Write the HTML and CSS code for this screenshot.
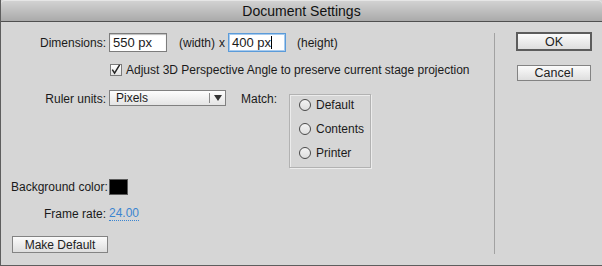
FILE: index.html
```html
<!DOCTYPE html>
<html>
<head>
<meta charset="utf-8">
<link rel="stylesheet" href="styles.css">
</head>
<body>
<div class="window">
  <div class="titlebar">Document Settings</div>
  <div class="content">
    <div class="main">
      <div class="row row-dim">
        <span class="label">Dimensions:</span>
        <span class="field">550 px</span>
        <span class="unit unit-w">(width)</span>
        <span class="times">x</span>
        <span class="field focus">400 px<span class="caret"></span></span>
        <span class="unit unit-h">(height)</span>
      </div>
      <div class="row row-check">
        <span class="checkbox"><svg width="12" height="12" viewBox="0 0 12 12"><path d="M2.5 5.5 L5 9.5 L10.5 0.5" fill="none" stroke="#222" stroke-width="1.6"/></svg></span>
        <span class="check-text">Adjust 3D Perspective Angle to preserve current stage projection</span>
      </div>
      <div class="row row-ruler">
        <span class="label pad">Ruler units:</span>
        <div class="select">
          <span class="select-text">Pixels</span>
          <span class="select-arrow"><svg width="8" height="6" viewBox="0 0 8 6"><path d="M0 0 H8 L4 6 Z" fill="#333"/></svg></span>
        </div>
        <span class="match pad">Match:</span>
        <div class="group">
          <div class="radio"><span class="circle"></span>Default</div>
          <div class="radio"><span class="circle"></span>Contents</div>
          <div class="radio"><span class="circle"></span>Printer</div>
        </div>
      </div>
      <div class="row row-bg">
        <span class="label">Background color:</span>
        <span class="swatch"></span>
      </div>
      <div class="row row-fps">
        <span class="label">Frame rate:</span>
        <span class="value">24.00</span>
      </div>
      <div class="row row-btn">
        <span class="btn btn-make">Make Default</span>
      </div>
    </div>
    <div class="sep"></div>
    <div class="side">
      <span class="btn btn-ok">OK</span>
      <span class="btn btn-cancel">Cancel</span>
    </div>
  </div>
</div>
</body>
</html>
```
FILE: styles.css
```css
html, body {
  margin: 0;
  padding: 0;
  background: #d6d6d6;
}
body {
  font-family: "Liberation Sans", Arial, sans-serif;
  font-size: 12px;
  color: #1a1a1a;
}
.window {
  width: 602px;
  height: 266px;
  box-sizing: border-box;
  border-left: 1px solid #5e5e5e;
  border-bottom: 1px solid #5e5e5e;
  background: #d6d6d6;
  overflow: hidden;
}
.titlebar {
  height: 21px;
  line-height: 22px;
  border-bottom: 1px solid #505050;
  border-radius: 4px 4px 0 0;
  background: linear-gradient(#d4d4d4, #aaaaaa);
  box-shadow: inset 0 1px 0 #e6e6e6;
  text-align: center;
  font-size: 14px;
  color: #111;
}
.content {
  display: flex;
  height: 243px;
}
.main {
  width: 493px;
  box-sizing: border-box;
  padding: 11px 0 0 10px;
}
.row {
  display: flex;
  align-items: center;
}
.label {
  width: 95px;
  margin-right: 3px;
  text-align: right;
  white-space: nowrap;
}
.row-dim { height: 19px; }
.field {
  box-sizing: border-box;
  width: 58px;
  height: 19px;
  line-height: 17px;
  padding-left: 3px;
  background: #fff;
  border: 1px solid #7c7c7c;
  box-shadow: inset 0 1px 1px #bdbdbd;
  font-size: 13px;
  display: flex;
  align-items: center;
}
.field.focus {
  margin-left: 3px;
  border: 1px solid #5b9bd9;
  box-shadow: inset 0 0 0 1px #a8cbee;
}
.caret {
  display: inline-block;
  width: 1px;
  height: 13px;
  background: #000;
}
.unit-w { margin-left: 12px; }
.times { margin-left: 4px; }
.unit-h { margin-left: 11px; }

.row-check {
  margin-top: 12px;
  height: 12px;
  padding-left: 99px;
}
.checkbox {
  box-sizing: border-box;
  width: 12px;
  height: 12px;
  border: 1px solid #7a7a7a;
  background: linear-gradient(#ffffff, #e2e2e2);
  display: flex;
}
.checkbox svg { margin: -1px 0 0 -1px; }
.check-text {
  margin-left: 4px;
  font-size: 12px;
  white-space: nowrap;
}

.row-ruler {
  margin-top: 14px;
  align-items: flex-start;
  height: 78px;
}
.pad { padding-top: 2px; }
.select {
  box-sizing: border-box;
  width: 117px;
  height: 16px;
  border: 1px solid #808080;
  background: linear-gradient(#fdfdfd, #e4e4e4);
  display: flex;
  align-items: center;
}
.select-text {
  flex: 1;
  padding-left: 6px;
}
.select-arrow {
  width: 15px;
  height: 10px;
  border-left: 1px solid #8a8a8a;
  display: flex;
  align-items: center;
  justify-content: center;
}
.match { margin-left: 15px; }
.group {
  box-sizing: border-box;
  margin-left: 12px;
  margin-top: 4px;
  width: 82px;
  height: 74px;
  border: 1px solid #b2b2b2;
  box-shadow: 1px 1px 0 #ececec, inset 1px 1px 0 #ececec;
  padding: 4px 0 0 9px;
  display: grid;
  grid-auto-rows: 12px;
  row-gap: 12px;
}
.radio {
  display: flex;
  align-items: center;
  font-size: 12px;
  line-height: 12px;
  white-space: nowrap;
}
.circle {
  box-sizing: border-box;
  width: 12px;
  height: 12px;
  border-radius: 50%;
  border: 1px solid #4a4a4a;
  background: linear-gradient(#f4f4f4, #dedede);
  margin-right: 5px;
}

.row-bg {
  margin-top: 11px;
  height: 15px;
}
.swatch {
  box-sizing: border-box;
  width: 19px;
  height: 16px;
  background: #000;
  border: 1px solid #5a5a5a;
}
.row-fps {
  margin-top: 13px;
  height: 14px;
}
.value {
  color: #3b85d0;
  border-bottom: 1px dotted #3b85d0;
  line-height: 13px;
}
.row-btn {
  margin-top: 15px;
}
.btn {
  box-sizing: border-box;
  display: flex;
  align-items: center;
  justify-content: center;
  background: linear-gradient(#fbfbfb, #dedede);
  border: 1px solid #838383;
  color: #222;
  white-space: nowrap;
}
.btn-make {
  margin-left: 1px;
  width: 96px;
  height: 17px;
}
.sep {
  width: 1px;
  margin-top: 11px;
  height: 221px;
  background: #a2a2a2;
}
.side {
  padding: 10px 0 0 21px;
  display: flex;
  flex-direction: column;
}
.btn-ok {
  width: 76px;
  height: 19px;
  border: 2px solid #5c5c5c;
  font-size: 12.5px;
}
.btn-cancel {
  margin-top: 14px;
  margin-left: 1px;
  width: 74px;
  height: 16px;
  font-size: 12.5px;
}
```
